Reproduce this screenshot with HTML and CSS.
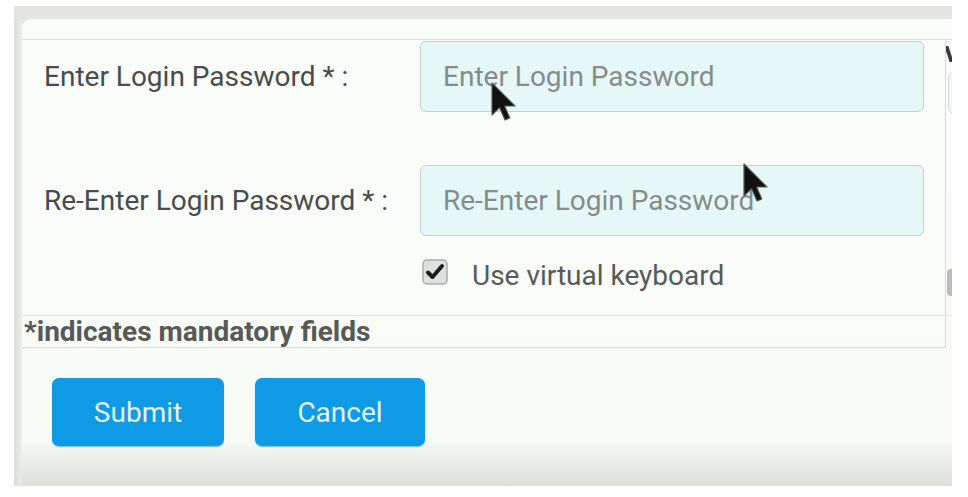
FILE: index.html
```html
<!DOCTYPE html>
<html>
<head>
<meta charset="utf-8">
<link rel="stylesheet" href="styles.css">
</head>
<body>
<div class="screen">
  <div class="topbar"></div>
  <div class="main">
    <div class="strip"></div>
    <div class="content">
      <div class="fs-wrap">
        <div class="fs">
          <div class="row">
            <label class="lbl">Enter Login Password * :</label>
            <input class="inp" type="password" placeholder="Enter Login Password">
          </div>
          <div class="row row2">
            <label class="lbl">Re-Enter Login Password * :</label>
            <input class="inp" type="password" placeholder="Re-Enter Login Password">
          </div>
          <div class="kb-row">
            <span class="cb">
              <svg width="26" height="26" viewBox="0 0 26 26"><rect x="1" y="1" width="24" height="24" rx="4" fill="#dfe1df" stroke="#a9adaa" stroke-width="1.5"/><path d="M6 13.5 L10.5 18 L20 7" fill="none" stroke="#1e1e1e" stroke-width="4" stroke-linecap="round" stroke-linejoin="round"/></svg>
            </span>
            <span class="kb-text">Use virtual keyboard</span>
          </div>
          <div class="mandatory">*indicates mandatory fields</div>
        </div>
        <div class="side">
          <span class="side-v"></span>
          <span class="side-box"></span>
          <span class="side-btn"></span>
        </div>
      </div>
      <div class="actions">
        <button class="btn btn-submit">Submit</button>
        <button class="btn btn-cancel">Cancel</button>
      </div>
      <svg class="cursor cursor1" width="26" height="40" viewBox="0 0 13 20"><path d="M0.5 0.5 L0.5 16.5 L4.3 12.8 L7 19 L9.4 18 L6.8 12 L12 12 Z" fill="#111" stroke="#555" stroke-width="0.6" stroke-linejoin="round"/></svg>
      <svg class="cursor cursor2" width="26" height="40" viewBox="0 0 13 20"><path d="M0.5 0.5 L0.5 16.5 L4.3 12.8 L7 19 L9.4 18 L6.8 12 L12 12 Z" fill="#111" stroke="#555" stroke-width="0.6" stroke-linejoin="round"/></svg>
    </div>
  </div>
</div>
</body>
</html>
```
FILE: styles.css
```css
* { box-sizing: border-box; }
html, body { margin: 0; padding: 0; background: #ffffff; }
body { font-family: Roboto, "Noto Sans", Arial, sans-serif; }

.screen {
  margin: 6px 0 0 14px;
  width: 938px;
  height: 480px;
  background: #e4e7e2;
  display: flex;
  flex-direction: column;
}
.topbar { height: 13px; background: #e2e5e0; flex: none; }
.main { flex: 1; display: flex; min-height: 0; }
.strip {
  flex: none;
  width: 8px;
  background: linear-gradient(to right, #d9dcd7, #eceee9);
}
.content {
  flex: 1;
  min-width: 0;
  position: relative;
  border-top-left-radius: 9px;
  padding-top: 20px;
  background: linear-gradient(to bottom, #f9fcf8 0, #f8fbf6 calc(100% - 48px), #dcdfda 100%);
}

.fs-wrap {
  display: flex;
  border-top: 1px solid #dde1dc;
}
.fs {
  flex: none;
  width: 924px;
  border-right: 1px solid #d6dad5;
  border-bottom: 1px solid #d9ddd8;
  padding-top: 1px;
}
.row { display: flex; align-items: center; }
.row2 { margin-top: 53px; }
.lbl {
  width: 398px;
  padding-left: 22px;
  font-size: 28px;
  color: #4a4c4b;
}
.inp {
  width: 504px;
  height: 71px;
  border: 1px solid #c8d0ce;
  border-radius: 6px;
  background: #e5f8f7;
  padding: 0 0 0 22px;
  font-family: Roboto, "Noto Sans", Arial, sans-serif;
  font-size: 28px;
  color: #555;
  outline: none;
}
.inp::placeholder { color: #878c8b; }

.kb-row {
  display: flex;
  margin-top: 23px;
  margin-bottom: 22px;
  height: 34px;
  padding-left: 400px;
}
.cb { width: 26px; height: 26px; display: block; }
.cb svg { display: block; }
.kb-text {
  margin-left: 24px;
  font-size: 28px;
  line-height: 34px;
  color: #575a59;
}

.mandatory {
  margin-right: -7px;
  border-top: 1px solid #e0e3df;
  height: 32px;
  line-height: 32px;
  padding-left: 2px;
  font-size: 28px;
  font-weight: bold;
  color: #575958;
  white-space: nowrap;
}

.side {
  flex: none;
  width: 6px;
  overflow: hidden;
  display: flex;
  flex-direction: column;
}
.side-v {
  flex: none;
  margin: 6px 0 0 1px;
  width: 4px;
  height: 16px;
  background: #3a3c3b;
  transform: skewX(18deg);
}
.side-box {
  flex: none;
  margin: 10px 0 0 2px;
  width: 20px;
  height: 42px;
  border: 1px solid #d3d8d5;
  border-radius: 6px;
  background: #eef7f5;
}
.side-btn {
  flex: none;
  margin: 155px 0 0 1px;
  width: 20px;
  height: 27px;
  border-radius: 4px;
  background: #b8bbb9;
}

.actions {
  display: flex;
  gap: 31px;
  padding: 30px 0 0 30px;
}
.btn {
  height: 68px;
  border: none;
  border-radius: 7px;
  background: #0f9ae6;
  color: #e3f3fc;
  font-family: Roboto, "Noto Sans", Arial, sans-serif;
  font-size: 28px;
  box-shadow: 0 1px 1px #6cc2f1;
}
.btn-submit { width: 172px; }
.btn-cancel { width: 170px; }

.cursor { position: absolute; }
.cursor1 { left: 469px; top: 63px; }
.cursor2 { left: 721px; top: 144px; }
```
